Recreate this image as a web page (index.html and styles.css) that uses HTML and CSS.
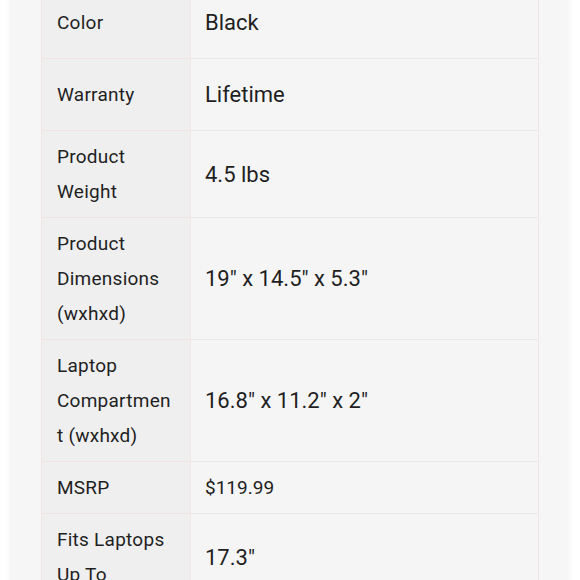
FILE: index.html
```html
<!DOCTYPE html>
<html>
<head>
<meta charset="utf-8">
<link rel="stylesheet" href="styles.css">
</head>
<body>
<div class="card">
  <div class="specs">
    <div class="label"><span>Color</span></div><div class="value big">Black</div>
    <div class="label"><span>Warranty</span></div><div class="value big">Lifetime</div>
    <div class="label"><span>Product Weight</span></div><div class="value big">4.5 lbs</div>
    <div class="label"><span>Product Dimensions (wxhxd)</span></div><div class="value big">19" x 14.5" x 5.3"</div>
    <div class="label"><span>Laptop Compartment (wxhxd)</span></div><div class="value big">16.8" x 11.2" x 2"</div>
    <div class="label"><span>MSRP</span></div><div class="value">$119.99</div>
    <div class="label"><span>Fits Laptops Up To</span></div><div class="value big">17.3"</div>
  </div>
</div>
</body>
</html>
```
FILE: styles.css
```css
html, body {
  margin: 0;
  padding: 0;
  background: #ffffff;
}
body {
  font-family: Roboto, "Noto Sans", sans-serif;
  color: #1f1f1f;
  overflow: hidden;
  height: 580px;
}
.card {
  margin: -13px 12px 0 11px;
  padding: 0 29px 40px 30px;
  background: #f6f6f6;
  box-shadow: 0 0 7px rgba(0, 0, 0, 0.07);
}
.specs {
  display: grid;
  grid-template-columns: 149px 1fr;
  border-left: 1px solid #f1e4e4;
  border-right: 1px solid #f1e4e4;
}
.label {
  background: #efefef;
  font-size: 19px;
  letter-spacing: 0.25px;
  line-height: 35px;
  padding: 8px 15px 8px 15px;
  display: flex;
  align-items: center;
  border-bottom: 1px solid #f3e2e2;
  border-right: 1px solid #f3e6e6;
  min-width: 0;
}
.label span {
  min-width: 0;
  overflow-wrap: anywhere;
}
.value {
  background: #f5f5f5;
  font-size: 19px;
  line-height: 35px;
  padding: 8px 14px;
  display: flex;
  align-items: center;
  border-bottom: 1px solid #ebe8e8;
}
.value.big {
  font-size: 22px;
  line-height: 55px;
}
```
